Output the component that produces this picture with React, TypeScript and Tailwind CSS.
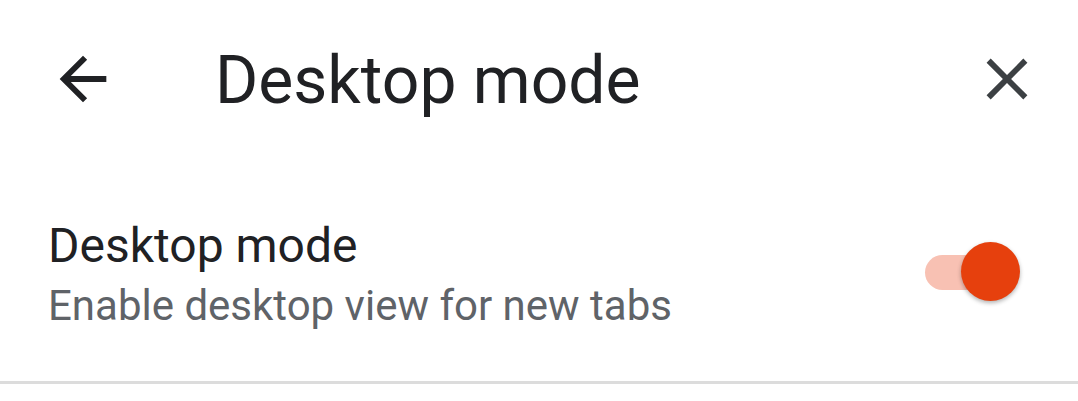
export default function App() {
  return (
    <div className="w-[1078px] h-[401px] bg-white overflow-hidden" style={{ fontFamily: 'Roboto, "Noto Sans", sans-serif' }}>
      {/* Toolbar */}
      <div className="flex items-center h-[162px] pl-[48px] pr-[36px]">
        <svg className="w-[70px] h-[70px] text-[#202124] -mt-[4px]" viewBox="0 0 24 24" fill="currentColor">
          <path d="M20 11H7.83l5.59-5.59L12 4l-8 8 8 8 1.41-1.41L7.83 13H20v-2z" />
        </svg>
        <h1 className="ml-[97px] flex-1 text-[66px] leading-none text-[#202124]">Desktop mode</h1>
        <svg className="w-[70px] h-[70px] text-[#3c4043] -mt-[4px]" viewBox="0 0 24 24" fill="currentColor">
          <path d="M19 6.41L17.59 5 12 10.59 6.41 5 5 6.41 10.59 12 5 17.59 6.41 19 12 13.41 17.59 19 19 17.59 13.41 12z" />
        </svg>
      </div>

      {/* Setting row */}
      <div className="flex items-center pl-[48px] pr-[58px] pt-[56px] pb-[51px]">
        <div className="flex-1 flex flex-col gap-[8px]">
          <div className="text-[48px] leading-[56px] text-[#202124]">Desktop mode</div>
          <div className="text-[42px] leading-[48px] text-[#5f6368]">Enable desktop view for new tabs</div>
        </div>
        <div className="relative w-[95px] h-[60px] flex items-center mb-[4px]">
          <div className="w-[64px] h-[35px] rounded-full bg-[#f8c1b3]" />
          <div className="absolute right-0 top-0 w-[59px] h-[59px] rounded-full bg-[#e6400d] shadow-[0_2px_4px_rgba(0,0,0,0.3)]" />
        </div>
      </div>

      <div className="h-[3px] bg-[#dcdcdc]" />
    </div>
  );
}
